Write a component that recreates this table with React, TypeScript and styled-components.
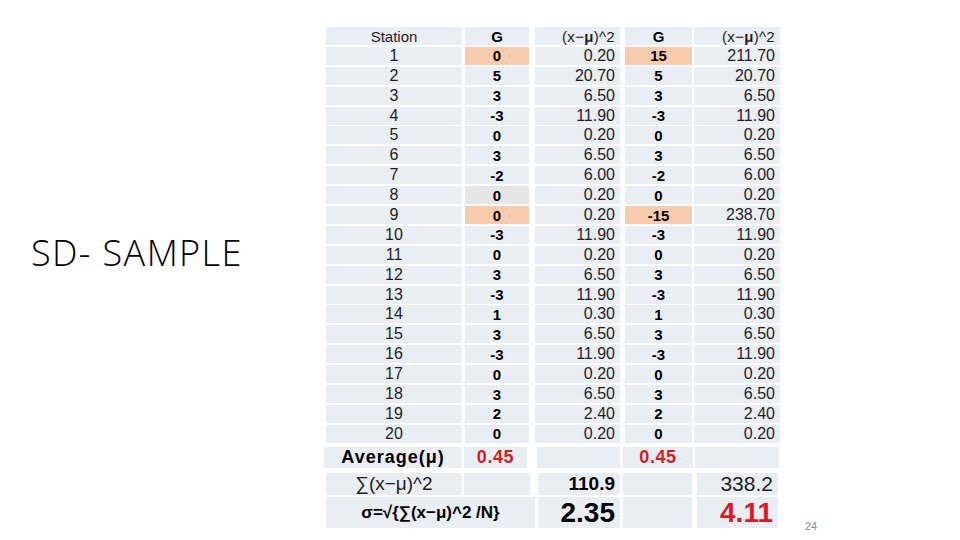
import React from "react";
import styled, { createGlobalStyle } from "styled-components";

const GlobalStyle = createGlobalStyle`
  html, body { margin: 0; padding: 0; background: #fff; }
  body {
    width: 960px;
    height: 540px;
    overflow: hidden;
    font-family: "Liberation Sans", Arial, sans-serif;
  }
`;

const Page = styled.div`
  width: 960px;
  height: 540px;
  display: flex;
  box-sizing: border-box;
`;

const TitleArea = styled.div`
  width: 326px;
  flex: none;
  box-sizing: border-box;
  padding: 235px 0 0 31px;
`;

const Title = styled.h1`
  margin: 0;
  font-family: "Open Sans", "Noto Sans", sans-serif;
  font-weight: 300;
  font-size: 36px;
  line-height: 36px;
  letter-spacing: 1.4px;
  color: #000;
  white-space: nowrap;
`;

const Table = styled.div`
  width: 454px;
  flex: none;
  padding-top: 27px;
  display: flex;
  flex-direction: column;
  gap: 1.9px;
`;

const Row = styled.div<{ $h?: number; $mt?: number }>`
  display: flex;
  height: ${(p) => p.$h ?? 18}px;
  margin-top: ${(p) => p.$mt ?? 0}px;
`;

type Tone = "plain" | "orange" | "gray";

const toneBg: Record<Tone, string> = {
  plain: "#e9edf4",
  orange: "#f8cbad",
  gray: "#e6e6e6",
};

const Cell = styled.div<{
  $w: number;
  $ml: number;
  $tone?: Tone;
  $align?: "center" | "right";
}>`
  flex: none;
  width: ${(p) => p.$w}px;
  margin-left: ${(p) => p.$ml}px;
  background: ${(p) => toneBg[p.$tone ?? "plain"]};
  display: flex;
  align-items: center;
  justify-content: ${(p) => (p.$align === "right" ? "flex-end" : "center")};
  padding-right: ${(p) => (p.$align === "right" ? 5 : 0)}px;
  box-sizing: border-box;
  white-space: nowrap;
`;

const Txt = styled.span<{ $size?: number; $bold?: boolean; $red?: boolean; $track?: number }>`
  font-size: ${(p) => p.$size ?? 16}px;
  font-weight: ${(p) => (p.$bold ? 700 : 400)};
  color: ${(p) => (p.$red ? "#dc1a22" : p.$bold ? "#000" : "#1e1e1e")};
  letter-spacing: ${(p) => p.$track ?? 0}px;
  line-height: 1;
`;

const PageNum = styled.div`
  align-self: flex-end;
  margin-left: 25px;
  padding-bottom: 8px;
  font-size: 11px;
  line-height: 12px;
  color: #8a8a8a;
`;

const COLS = [
  { w: 136, ml: 0 },
  { w: 64, ml: 3 },
  { w: 85, ml: 6 },
  { w: 67, ml: 5 },
  { w: 86, ml: 2 },
];

const g1 = [0, 5, 3, -3, 0, 3, -2, 0, 0, -3, 0, 3, -3, 1, 3, -3, 0, 3, 2, 0];
const sq1 = ["0.20", "20.70", "6.50", "11.90", "0.20", "6.50", "6.00", "0.20", "0.20", "11.90", "0.20", "6.50", "11.90", "0.30", "6.50", "11.90", "0.20", "6.50", "2.40", "0.20"];
const g2 = [15, 5, 3, -3, 0, 3, -2, 0, -15, -3, 0, 3, -3, 1, 3, -3, 0, 3, 2, 0];
const sq2 = ["211.70", "20.70", "6.50", "11.90", "0.20", "6.50", "6.00", "0.20", "238.70", "11.90", "0.20", "6.50", "11.90", "0.30", "6.50", "11.90", "0.20", "6.50", "2.40", "0.20"];

const tone1 = (i: number): Tone => (i === 0 || i === 8 ? "orange" : i === 7 ? "gray" : "plain");
const tone2 = (i: number): Tone => (i === 0 || i === 8 ? "orange" : "plain");

const SqHead = () => (
  <Txt $size={15} $track={0.3}>
    (x−<b>μ</b>)^2
  </Txt>
);

export default function App() {
  return (
    <>
      <GlobalStyle />
      <Page>
        <TitleArea>
          <Title>SD- SAMPLE</Title>
        </TitleArea>
        <Table>
          <Row>
            <Cell $w={COLS[0].w} $ml={COLS[0].ml}>
              <Txt $size={15}>Station</Txt>
            </Cell>
            <Cell $w={COLS[1].w} $ml={COLS[1].ml}>
              <Txt $size={15} $bold>G</Txt>
            </Cell>
            <Cell $w={COLS[2].w} $ml={COLS[2].ml} $align="right">
              <SqHead />
            </Cell>
            <Cell $w={COLS[3].w} $ml={COLS[3].ml}>
              <Txt $size={15} $bold>G</Txt>
            </Cell>
            <Cell $w={COLS[4].w} $ml={COLS[4].ml} $align="right">
              <SqHead />
            </Cell>
          </Row>
          {g1.map((g, i) => (
            <Row key={i}>
              <Cell $w={COLS[0].w} $ml={COLS[0].ml}>
                <Txt>{i + 1}</Txt>
              </Cell>
              <Cell $w={COLS[1].w} $ml={COLS[1].ml} $tone={tone1(i)}>
                <Txt $size={15} $bold>{g}</Txt>
              </Cell>
              <Cell $w={COLS[2].w} $ml={COLS[2].ml} $align="right">
                <Txt>{sq1[i]}</Txt>
              </Cell>
              <Cell $w={COLS[3].w} $ml={COLS[3].ml} $tone={tone2(i)}>
                <Txt $size={15} $bold>{g2[i]}</Txt>
              </Cell>
              <Cell $w={COLS[4].w} $ml={COLS[4].ml} $align="right">
                <Txt>{sq2[i]}</Txt>
              </Cell>
            </Row>
          ))}
          <Row $h={21} $mt={2}>
            <Cell $w={138} $ml={-2}>
              <Txt $size={18} $bold $track={1}>Average(μ)</Txt>
            </Cell>
            <Cell $w={63} $ml={2}>
              <Txt $size={18} $bold $red $track={0.6}>0.45</Txt>
            </Cell>
            <Cell $w={83} $ml={10} />
            <Cell $w={70} $ml={3}>
              <Txt $size={18} $bold $red $track={0.6}>0.45</Txt>
            </Cell>
            <Cell $w={84} $ml={2} />
          </Row>
          <Row $h={22} $mt={3}>
            <Cell $w={136} $ml={0}>
              <Txt $size={19}>∑(x−μ)^2</Txt>
            </Cell>
            <Cell $w={66} $ml={2} />
            <Cell $w={82} $ml={8} $align="right">
              <Txt $size={19} $bold>110.9</Txt>
            </Cell>
            <Cell $w={69} $ml={3} />
            <Cell $w={81} $ml={5} $align="right">
              <Txt $size={21}>338.2</Txt>
            </Cell>
          </Row>
          <Row $h={31} $mt={1}>
            <Cell $w={209} $ml={0}>
              <Txt $size={17} $bold>σ=√{"{"}∑(x−μ)^2 /N{"}"}</Txt>
            </Cell>
            <Cell $w={82} $ml={3} $align="right">
              <Txt $size={28} $bold>2.35</Txt>
            </Cell>
            <Cell $w={69} $ml={3} />
            <Cell $w={81} $ml={5} $align="right">
              <Txt $size={28} $bold $red>4.11</Txt>
            </Cell>
          </Row>
        </Table>
        <PageNum>24</PageNum>
      </Page>
    </>
  );
}
